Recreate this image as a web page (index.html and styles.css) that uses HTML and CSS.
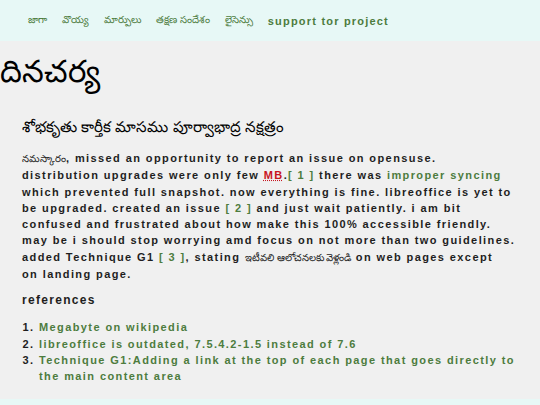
FILE: index.html
```html
<!DOCTYPE html>
<html lang="te">
<head>
<meta charset="utf-8">
<title>దినచర్య</title>
<link rel="stylesheet" href="styles.css">
</head>
<body>
<header class="topbar">
  <nav class="nav">
    <a href="#" class="nav-te">జాగా</a>
    <a href="#" class="nav-te">వొయ్య</a>
    <a href="#" class="nav-te">మార్పులు</a>
    <a href="#" class="nav-te">తక్షణ సందేశం</a>
    <a href="#" class="nav-te">లైసెన్సు</a>
    <a href="#" class="nav-en">support tor project</a>
  </nav>
</header>
<main class="main">
  <h1 class="title">దినచర్య</h1>
  <section class="content">
    <h2 class="date">శోభకృతు కార్తీక మాసము పూర్వాభాద్ర నక్షత్రం</h2>
    <p class="entry"><span class="te-inline">నమస్కారం</span>, missed an opportunity to report an issue on opensuse. distribution upgrades were only few <abbr class="abbr" title="Megabyte">MB</abbr>.<a href="#r1" class="ref">[ 1 ]</a> there was <a href="#" class="link">improper syncing</a> which prevented full snapshot. now everything is fine. libreoffice is yet to be upgraded. created an issue <a href="#r2" class="ref">[ 2 ]</a> and just wait patiently. i am bit confused and frustrated about how make this 100% accessible friendly. may be i should stop worrying amd focus on not more than two guidelines. added Technique G1 <a href="#r3" class="ref">[ 3 ]</a>, stating <span class="te-inline">ఇటీవలి ఆలోచనలకు వెళ్లండి</span> on web pages except on&nbsp;landing&nbsp;page.</p>
    <h3 class="refs-title">references</h3>
    <ol class="refs">
      <li id="r1"><a href="#" class="link">Megabyte on wikipedia</a></li>
      <li id="r2"><a href="#" class="link">libreoffice is outdated, 7.5.4.2-1.5 instead of 7.6</a></li>
      <li id="r3"><a href="#" class="link">Technique G1:Adding a link at the top of each page that goes directly to the main content area</a></li>
    </ol>
  </section>
</main>
<footer class="bottombar"></footer>
</body>
</html>
```
FILE: styles.css
```css
html, body {
  margin: 0;
  padding: 0;
}
body {
  background: #f0f0f0;
  font-family: "Liberation Sans", Arial, "Lohit Telugu", sans-serif;
  color: #1e1e1e;
}
.topbar {
  background: #e7f8f6;
  height: 41px;
  display: flex;
  align-items: center;
}
.nav {
  display: flex;
  align-items: center;
  gap: 15px;
  padding-left: 28px;
}
.nav a {
  color: #4d7c3e;
  text-decoration: none;
}
.nav-te {
  font-size: 10px;
}
.nav-en {
  font-size: 11px;
  font-weight: bold;
  letter-spacing: 1.2px;
}
.main {
  padding-bottom: 14px;
}
.title {
  margin: 6px 0 0 0;
  font-size: 31px;
  font-weight: normal;
  line-height: 50px;
  color: #000;
}
.content {
  padding: 0 24px 0 22px;
}
.date {
  margin: 18px 0 0 0;
  font-size: 15px;
  font-weight: normal;
  line-height: 24px;
  color: #000;
}
.entry {
  margin: 11px 0 0 0;
  font-size: 11px;
  font-weight: bold;
  letter-spacing: 1.4px;
  line-height: 16.3px;
}
.te-inline {
  font-size: 10px;
  font-weight: normal;
  letter-spacing: 0;
}
.abbr {
  color: #c8141e;
  text-decoration: underline dotted #c8141e;
}
.ref, .link {
  color: #4d7c3e;
  text-decoration: none;
}
.refs-title {
  margin: 9px 0 0 0;
  font-size: 12px;
  letter-spacing: 1.3px;
  line-height: 18px;
}
.refs {
  margin: 10px 0 0 0;
  padding-left: 17px;
  font-size: 11px;
  font-weight: bold;
  letter-spacing: 1.4px;
  line-height: 16.3px;
}
.bottombar {
  background: #e7f8f6;
  height: 6px;
}
```
